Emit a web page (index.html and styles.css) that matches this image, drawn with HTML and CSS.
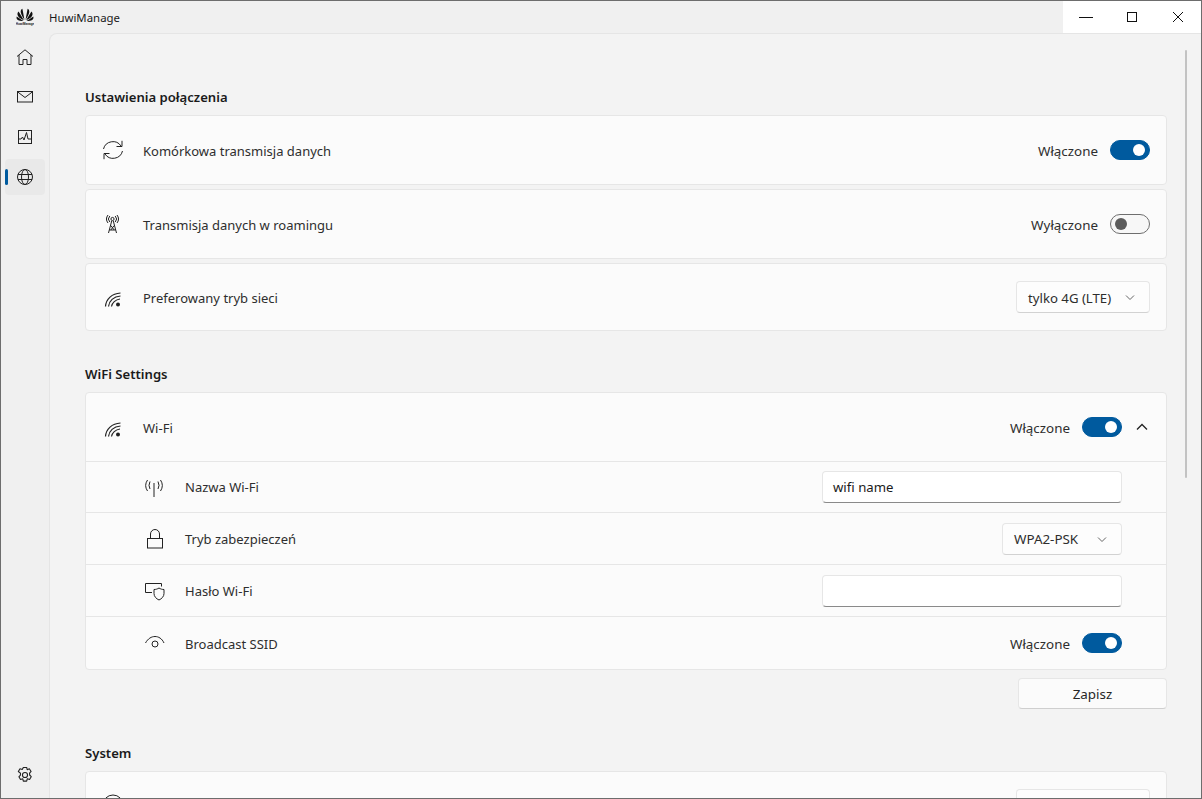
FILE: index.html
```html
<!DOCTYPE html>
<html lang="pl">
<head>
<meta charset="utf-8">
<title>HuwiManage</title>
<link rel="stylesheet" href="styles.css">
</head>
<body>
<div class="window">
  <header class="titlebar">
    <svg class="logo" width="18" height="18" viewBox="0 0 18 18" fill="#111">
      <path d="M8.500 12 6.400.8C5 1.300 4.500 3 4.800 4.600c.4 2.500 2.200 5 3.700 7.400Z"/>
      <path d="M9.500 12 11.600.8c1.400.5 1.900 2.200 1.600 3.800-.4 2.500-2.200 5-3.700 7.400Z"/>
      <path d="M7.900 12.300 2.600 3.600C1.300 4.800 1.100 6.500 2 7.900c1.300 2 3.700 3.300 5.900 4.400Z"/>
      <path d="M10.100 12.300 15.400 3.600c1.300 1.200 1.500 2.900.6 4.300-1.300 2-3.700 3.300-5.900 4.400Z"/>
      <path d="M7.400 13 .7 8.600c-.5 1.600.1 3 1.500 3.700 1.600.8 3.400.9 5.200.7Z"/>
      <path d="M10.600 13l6.700-4.400c.5 1.600-.1 3-1.500 3.700-1.600.8-3.400.9-5.200.7Z"/>
      <text x="9" y="17" text-anchor="middle" font-size="3" font-weight="700" font-family="Liberation Sans, sans-serif">HuwiManage</text>
    </svg>
    <span class="app-name">HuwiManage</span>
    <div class="controls">
      <div class="ctl"><svg width="16" height="16" viewBox="0 0 16 16" fill="none" stroke="#111"><path d="M1 8.500h14"/></svg></div>
      <div class="ctl"><svg width="16" height="16" viewBox="0 0 16 16" fill="none" stroke="#111"><rect x="3.500" y="3.500" width="9" height="9"/></svg></div>
      <div class="ctl"><svg width="16" height="16" viewBox="0 0 16 16" fill="none" stroke="#111"><path d="M3 3l10 10M13 3 3 13"/></svg></div>
    </div>
  </header>
  <div class="body">
    <nav class="sidebar">
      <div class="nav-item">
        <svg width="18" height="18" viewBox="0 0 18 18" fill="none" stroke="#222" stroke-linejoin="round"><path d="M1 8.500 9 1.800l8 6.700M3 7v9.500h4v-5h4v5h4V7"/></svg>
      </div>
      <div class="nav-item">
        <svg width="18" height="18" viewBox="0 0 18 18" fill="none" stroke="#222"><rect x="1.500" y="3.500" width="15" height="10.500"/><path d="M1.500 3.800 9 9.500l7.500-5.700"/></svg>
      </div>
      <div class="nav-item">
        <svg width="18" height="18" viewBox="0 0 18 18" fill="none" stroke="#222"><rect x="2.500" y="2.500" width="13" height="13"/><path d="M2.500 11h2.500l1.500-2 1.500 3 2.500-7.500 1.500 6.500h3"/></svg>
      </div>
      <div class="nav-item selected">
        <svg width="18" height="18" viewBox="0 0 18 18" fill="none" stroke="#222"><circle cx="9" cy="9" r="7.500"/><ellipse cx="9" cy="9" rx="3.500" ry="7.500"/><path d="M2 6.500h14M2 11.500h14"/></svg>
      </div>
      <div class="nav-item settings">
        <svg width="20" height="20" viewBox="0 0 18 18" fill="none" stroke="#222" stroke-linejoin="round"><path d="M7.500 2.200h3l.5 2 1.900-.8 1.600 2.400-1.400 1.500.1 1.700 1.400 1.500-1.500 2.500-2-.7-.6 2.200h-3l-.5-2.100-2 .7-1.500-2.500 1.400-1.500v-1.800L3 5.800l1.500-2.400 2 .7Z"/><circle cx="9" cy="9" r="2.300"/></svg>
      </div>
    </nav>
    <main class="content">
      <div class="scrollbar"></div>

      <h2 class="section-title">Ustawienia połączenia</h2>
      <div class="stack">
        <div class="card row-main">
          <svg class="icon" width="22" height="22" viewBox="0 0 22 22" fill="none" stroke="#222"><path d="M1.500 10A9.700 9.700 0 0 1 19 7"/><path d="M20 1.800v5.700h-5.500"/><path d="M20.500 12A9.700 9.700 0 0 1 3 15"/><path d="M2 20.200v-5.700h5.500"/></svg>
          <span class="label">Komórkowa transmisja danych</span>
          <span class="state">Włączone</span>
          <span class="toggle on"></span>
        </div>
        <div class="card row-main">
          <svg class="icon" width="22" height="22" viewBox="0 0 22 22" fill="none" stroke="#222"><circle cx="10.500" cy="6" r="1.600"/><path d="M7.800 3a4.300 4.300 0 0 0 0 6M13.200 3a4.300 4.300 0 0 1 0 6M6 2a6.500 6.500 0 0 0 0 8M15 2a6.500 6.500 0 0 1 0 8"/><path d="M9.700 8 6.500 20M11.300 8l3.200 12M7.500 17h6M8.800 12.500l3.400 4.500M12.200 12.500 8.800 17"/></svg>
          <span class="label">Transmisja danych w roamingu</span>
          <span class="state">Wyłączone</span>
          <span class="toggle"></span>
        </div>
        <div class="card row-main short">
          <svg class="icon" width="22" height="22" viewBox="0 0 22 22" fill="none" stroke="#222" stroke-width="1.200"><path d="M3.500 20.500C4 13 10 7.500 18.500 7M6.500 20.500C7 15 11.500 10.500 18.500 10M9.500 20.500c.5-3.500 4-7 8.500-7.500"/><circle cx="16" cy="18.500" r="2" fill="#222" stroke="none"/></svg>
          <span class="label">Preferowany tryb sieci</span>
          <div class="select wide"><span class="sel-text">tylko 4G (LTE)</span><svg width="12" height="12" viewBox="0 0 12 12" fill="none" stroke="#666"><path d="M2 4.500 6 8.500l4-4"/></svg></div>
        </div>
      </div>

      <h2 class="section-title second">WiFi Settings</h2>
      <div class="card group">
        <div class="row-main head">
          <svg class="icon" width="22" height="22" viewBox="0 0 22 22" fill="none" stroke="#222" stroke-width="1.200"><path d="M3.500 20.500C4 13 10 7.500 18.500 7M6.500 20.500C7 15 11.500 10.500 18.500 10M9.500 20.500c.5-3.500 4-7 8.500-7.500"/><circle cx="16" cy="18.500" r="2" fill="#222" stroke="none"/></svg>
          <span class="label">Wi-Fi</span>
          <span class="state">Włączone</span>
          <span class="toggle on"></span>
          <svg class="chev-up" width="12" height="12" viewBox="0 0 12 12" fill="none" stroke="#222" stroke-width="1.300"><path d="M1 8.500 6 3.500l5 5"/></svg>
        </div>
        <div class="row-sub first">
          <svg class="icon-sub" width="22" height="22" viewBox="0 0 22 22" fill="none" stroke="#222"><path d="M11 7v14"/><path d="M4.500 4Q.8 9.500 4.500 15M7 5.500q-2 4 0 7.500M17.500 4q3.700 5.500 0 11M15 5.500q2 4 0 7.500"/></svg>
          <span class="label">Nazwa Wi-Fi</span>
          <div class="input">wifi name</div>
        </div>
        <div class="row-sub">
          <svg class="icon-sub" width="22" height="22" viewBox="0 0 22 22" fill="none" stroke="#222"><rect x="4.500" y="10.500" width="15" height="9.500"/><path d="M7.500 10.500V6a4.500 4.500 0 0 1 9 0v4.500"/></svg>
          <span class="label">Tryb zabezpieczeń</span>
          <div class="select narrow"><span>WPA2-PSK</span><svg width="12" height="12" viewBox="0 0 12 12" fill="none" stroke="#666"><path d="M2 4.500 6 8.500l4-4"/></svg></div>
        </div>
        <div class="row-sub">
          <svg class="icon-sub" width="22" height="22" viewBox="0 0 22 22" fill="none" stroke="#222"><path d="M9 12.500H2.500v-9h16v3"/><path d="M16 8c1.500 1 3.200 1.500 5 1.500v4c0 3-2.300 5.300-5 6.500-2.700-1.200-5-3.500-5-6.500v-4c1.800 0 3.500-.5 5-1.500Z"/></svg>
          <span class="label">Hasło Wi-Fi</span>
          <div class="input"></div>
        </div>
        <div class="row-sub last">
          <svg class="icon-sub" width="22" height="22" viewBox="0 0 22 22" fill="none" stroke="#222"><path d="M2.500 11C5 6.500 8.500 4.500 12 4.500s7 2 9 6.500"/><circle cx="12" cy="12" r="3"/></svg>
          <span class="label">Broadcast SSID</span>
          <span class="state">Włączone</span>
          <span class="toggle on"></span>
        </div>
      </div>
      <div class="actions"><button class="save">Zapisz</button></div>

      <h2 class="section-title third">System</h2>
      <div class="card row-main short">
        <svg class="icon" width="22" height="22" viewBox="0 0 22 22" fill="none" stroke="#222"><circle cx="11" cy="11" r="10"/></svg>
        <span class="label"></span>
        <div class="select wide"></div>
      </div>
    </main>
  </div>
</div>
</body>
</html>
```
FILE: styles.css
```css
* { box-sizing: border-box; }
html, body { margin: 0; height: 100%; overflow: hidden; }
body {
  font-family: "Noto Sans", "Open Sans", sans-serif;
  font-size: 13.4px;
  color: #2e2e2e;
}
.window {
  width: 1202px;
  height: 799px;
  border: 1px solid #6d6d6d;
  background: #f0f0f0;
  display: flex;
  flex-direction: column;
  overflow: hidden;
}
.titlebar {
  flex: 0 0 32px;
  display: flex;
  align-items: center;
  padding-left: 15px;
}
.logo { display: block; flex: none; }
.app-name { margin-left: 15px; font-size: 11.4px; color: #1a1a1a; }
.controls {
  margin-left: auto;
  width: 138px;
  height: 32px;
  background: #fff;
  display: flex;
}
.ctl {
  flex: 1;
  display: flex;
  align-items: center;
  justify-content: center;
}
.body { flex: 1; display: flex; min-height: 0; }
.sidebar {
  flex: 0 0 48px;
  display: flex;
  flex-direction: column;
  padding: 6px 4px 4px 4px;
  gap: 4px;
}
.nav-item {
  height: 36px;
  width: 40px;
  border-radius: 4px;
  display: flex;
  align-items: center;
  justify-content: center;
  position: relative;
}
.nav-item.selected { background: #e9e9e9; }
.nav-item.selected::before {
  content: "";
  position: absolute;
  left: 0;
  top: 10px;
  width: 3px;
  height: 16px;
  border-radius: 2px;
  background: #005a9e;
}
.nav-item.settings { margin-top: auto; margin-bottom: 1px; }
.content {
  flex: 1;
  min-width: 0;
  position: relative;
  background: #f3f3f3;
  border-top: 1px solid #e5e5e5;
  border-left: 1px solid #e5e5e5;
  border-top-left-radius: 8px;
  padding: 53px 34px 0 35px;
  overflow: hidden;
}
.scrollbar {
  position: absolute;
  right: 14px;
  top: 16px;
  width: 2px;
  height: 428px;
  border-radius: 1px;
  background: #c2c2c2;
}
.section-title {
  margin: 0 0 8px;
  font-size: 13.1px;
  line-height: 20px;
  font-weight: 600;
  color: #1a1a1a;
}
.section-title.second { margin-top: 33px; }
.section-title.third { margin-top: 34px; }
.stack { display: flex; flex-direction: column; gap: 4px; }
.card {
  background: #fbfbfb;
  border: 1px solid #e6e6e6;
  border-radius: 4px;
}
.row-main {
  display: flex;
  align-items: center;
  height: 70px;
  padding: 0 16px;
}
.row-main.short { height: 68px; }
.row-main.head { height: 69px; border-bottom: 1px solid #e6e6e6; }
.icon { flex: none; margin-right: 19px; }
.icon-sub { flex: none; margin-right: 20px; }
.label { flex: 1; min-width: 0; font-size: 13px; }
.row-main .label, .row-main .state, .sel-text, .row-sub.last .label, .row-sub.last .state { padding-top: 2px; }
.state { margin-right: 12px; }
.toggle {
  flex: none;
  width: 40px;
  height: 20px;
  border-radius: 10px;
  border: 1px solid #6e6e6e;
  display: flex;
  align-items: center;
  padding: 0 4px;
  background: #f7f7f7;
}
.toggle::after {
  content: "";
  width: 12px;
  height: 12px;
  border-radius: 50%;
  background: #5c5c5c;
}
.toggle.on {
  background: #005a9e;
  border-color: #005a9e;
  justify-content: flex-end;
}
.toggle.on::after { background: #fff; }
.chev-up { flex: none; margin-left: 14px; margin-right: 2px; }
.select {
  flex: none;
  height: 32px;
  background: #fdfdfd;
  border: 1px solid #e6e6e6;
  border-bottom-color: #d2d2d2;
  border-radius: 4px;
  display: flex;
  align-items: center;
  justify-content: space-between;
  padding: 0 13px 0 11px;
}
.sel-text { font-size: 13.2px; }
.select.wide { width: 134px; }
.select.narrow { width: 120px; padding-left: 11px; }
.group { height: 278px; }
.row-sub {
  height: 52px;
  display: flex;
  align-items: center;
  padding: 0 44px 0 57px;
  border-bottom: 1px solid #e6e6e6;
}
.row-sub.first { height: 51px; }
.row-sub.last { border-bottom: 0; }
.input {
  flex: none;
  width: 300px;
  height: 32px;
  background: #fff;
  border: 1px solid #e6e6e6;
  border-bottom-color: #8a8a8a;
  border-radius: 4px;
  padding: 0 10px;
  display: flex;
  align-items: center;
  font-size: 13.2px;
  color: #1a1a1a;
}
.actions { display: flex; justify-content: flex-end; margin-top: 8px; }
.save {
  width: 149px;
  height: 31px;
  padding: 0;
  font: inherit;
  color: #262626;
  background: #fbfbfb;
  border: 1px solid #e6e6e6;
  border-bottom-color: #cfcfcf;
  border-radius: 4px;
}
```
